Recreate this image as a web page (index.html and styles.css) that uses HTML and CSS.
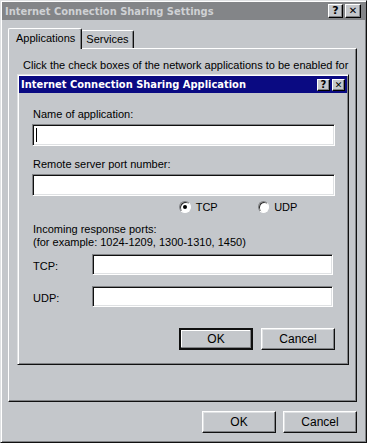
FILE: index.html
```html
<!DOCTYPE html>
<html lang="en">
<head>
    <meta charset="UTF-8">
    <meta name="viewport" content="width=device-width, initial-scale=1.0">
    <title>Internet Connection Sharing Settings</title>
    <link rel="stylesheet" href="styles.css">
</head>
<body>
    <div class="window">
        <div class="titlebar inactive">
            <span class="title">Internet Connection Sharing Settings</span>
            <span class="cap-btns">
                <span class="cap-btn">?</span>
                <span class="cap-btn close">&#x2715;</span>
            </span>
        </div>

        <div class="tabs">
            <div class="tab selected">Applications</div>
            <div class="tab">Services</div>
        </div>

        <div class="panel">
            <div class="intro">Click the check boxes of the network applications to be enabled for</div>

            <!-- child dialog -->
            <div class="dialog">
                <div class="titlebar active">
                    <span class="title">Internet Connection Sharing Application</span>
                    <span class="cap-btns">
                        <span class="cap-btn small">?</span>
                        <span class="cap-btn small close">&#x2715;</span>
                    </span>
                </div>
                <div class="dialog-body">
                    <label class="field-label">Name of application:</label>
                    <div class="textbox wide"><span class="caret"></span></div>

                    <label class="field-label second">Remote server port number:</label>
                    <div class="textbox wide"></div>

                    <div class="radio-row">
                        <span class="radio checked"><span class="dot"></span></span>
                        <span class="radio-text">TCP</span>
                        <span class="radio"></span>
                        <span class="radio-text">UDP</span>
                    </div>

                    <div class="note">Incoming response ports:<br>(for example: 1024-1209, 1300-1310, 1450)</div>

                    <div class="port-row">
                        <span class="port-label">TCP:</span>
                        <div class="textbox port"></div>
                    </div>
                    <div class="port-row">
                        <span class="port-label">UDP:</span>
                        <div class="textbox port"></div>
                    </div>

                    <div class="btn-row inner">
                        <div class="btn default">OK</div>
                        <div class="btn">Cancel</div>
                    </div>
                </div>
            </div>
        </div>

        <div class="btn-row outer">
            <div class="btn">OK</div>
            <div class="btn">Cancel</div>
        </div>
    </div>
</body>
</html>
```

FILE: styles.css
```css
body {
    margin: 0;
    padding: 0;
    background-color: #c4c7cb;
    font-family: "Liberation Sans", Arial, sans-serif;
    font-size: 11px;
    color: #000;
}
.window {
    width: 367px;
    height: 443px;
    box-sizing: border-box;
    background-color: #c4c7cb;
    border: 1px solid;
    border-color: #dfe1e3 #101010 #101010 #dfe1e3;
    box-shadow: inset 1px 1px #fff, inset -1px -1px #808285;
    padding: 1px;
    display: flex;
    flex-direction: column;
}

/* title bars */
.titlebar {
    height: 18px;
    display: flex;
    align-items: center;
    justify-content: space-between;
    padding: 0 4px 0 3px;
    flex-shrink: 0;
}
.titlebar .title {
    font-family: "DejaVu Sans Condensed", "DejaVu Sans", sans-serif;
    font-weight: bold;
    font-size: 11px;
    white-space: nowrap;
}
.titlebar.inactive {
    background-color: #838588;
}
.titlebar.inactive .title {
    color: #cfd1d4;
}
.titlebar.active {
    background-color: #0a0a82;
    height: 17px;
    padding: 0 2px 0 2px;
}
.titlebar.active .title {
    color: #fff;
}
.cap-btns {
    display: flex;
    gap: 1px;
}
.cap-btn {
    width: 15px;
    height: 14px;
    box-sizing: border-box;
    background-color: #c4c7cb;
    border: 1px solid;
    border-color: #fff #000 #000 #fff;
    box-shadow: inset -1px -1px #808285;
    font-family: "DejaVu Sans", sans-serif;
    font-weight: bold;
    font-size: 11px;
    line-height: 12px;
    text-align: center;
    color: #000;
}
.cap-btn.close {
    margin-left: 1px;
    width: 16px;
    font-size: 10px;
}
.cap-btn.small {
    width: 13px;
    height: 12px;
    font-size: 10px;
    line-height: 10px;
}
.cap-btn.small.close {
    font-size: 9px;
}

/* tabs */
.tabs {
    display: flex;
    align-items: flex-end;
    height: 28px;
    padding-left: 6px;
    flex-shrink: 0;
}
.tab {
    height: 17px;
    padding: 0 4px 0 4px;
    line-height: 17px;
    border: 1px solid;
    border-bottom: none;
    border-color: #fff #101010 #101010 #fff;
    box-shadow: inset -1px 0 #808285;
    border-radius: 2px 2px 0 0;
    white-space: nowrap;
}
.tab.selected {
    height: 20px;
    padding: 0 6px 0 7px;
    line-height: 19px;
    margin-right: -1px;
    position: relative;
    z-index: 1;
    margin-bottom: -1px;
    background-color: #c4c7cb;
}

/* tab page */
.panel {
    height: 354px;
    margin: 0 8px 0 6px;
    box-sizing: border-box;
    border: 1px solid;
    border-color: #fff #101010 #101010 #fff;
    box-shadow: inset -1px -1px #808285;
    padding: 10px 0 0 14px;
    flex-shrink: 0;
}
.intro {
    line-height: 13px;
    white-space: nowrap;
}

/* child dialog */
.dialog {
    width: 332px;
    height: 291px;
    margin: 2px 0 0 -6px;
    box-sizing: border-box;
    background-color: #c4c7cb;
    border: 1px solid;
    border-color: #dfe1e3 #101010 #101010 #dfe1e3;
    box-shadow: inset 1px 1px #fff, inset -1px -1px #808285;
    padding: 1px;
    display: flex;
    flex-direction: column;
    position: relative;
}
.dialog-body {
    padding: 15px 11px 0 13px;
    display: flex;
    flex-direction: column;
}
.field-label {
    display: block;
    line-height: 13px;
    padding-left: 1px;
    margin-bottom: 3px;
}
.field-label.second {
    margin-top: 12px;
}
.textbox {
    box-sizing: border-box;
    background-color: #fff;
    border: 1px solid;
    border-color: #808285 #fff #fff #808285;
    box-shadow: inset 1px 1px #101010, inset -1px -1px #dfe1e3;
    position: relative;
}
.textbox.wide {
    width: 303px;
    height: 22px;
}
.textbox.port {
    width: 241px;
    height: 21px;
}
.caret {
    position: absolute;
    left: 3px;
    top: 3px;
    width: 1px;
    height: 14px;
    background-color: #000;
}

.radio-row {
    display: flex;
    align-items: center;
    margin: 4px 0 0 147px;
    height: 14px;
}
.radio {
    width: 12px;
    height: 12px;
    box-sizing: border-box;
    border-radius: 50%;
    background-color: #fff;
    border: 1px solid;
    border-color: #808285 #fff #fff #808285;
    box-shadow: inset 1px 1px #303030;
    display: flex;
    align-items: center;
    justify-content: center;
}
.radio .dot {
    width: 4px;
    height: 4px;
    border-radius: 50%;
    background-color: #000;
}
.radio-text {
    margin-left: 5px;
    width: 64px;
}

.note {
    line-height: 13px;
    margin-top: 9px;
    padding-left: 1px;
}
.port-row {
    display: flex;
    align-items: center;
    margin-top: 5px;
}
.port-row + .port-row {
    margin-top: 11px;
}
.port-label {
    width: 60px;
    padding-left: 1px;
    box-sizing: border-box;
    margin-top: 2px;
}

/* buttons */
.btn-row {
    display: flex;
    justify-content: flex-end;
}
.btn-row.inner {
    margin-top: 21px;
    gap: 8px;
    padding-right: 1px;
}
.btn-row.outer {
    margin: 9px 8px 0 0;
    gap: 7px;
}
.btn {
    width: 74px;
    height: 22px;
    box-sizing: border-box;
    border: 1px solid;
    border-color: #fff #101010 #101010 #fff;
    box-shadow: inset -1px -1px #808285, inset 1px 1px #dfe1e3;
    text-align: center;
    line-height: 20px;
    font-size: 12px;
}
.btn.default {
    border: 2px solid #101010;
    box-shadow: inset -1px -1px #808285, inset 1px 1px #fff;
    line-height: 18px;
}
```
